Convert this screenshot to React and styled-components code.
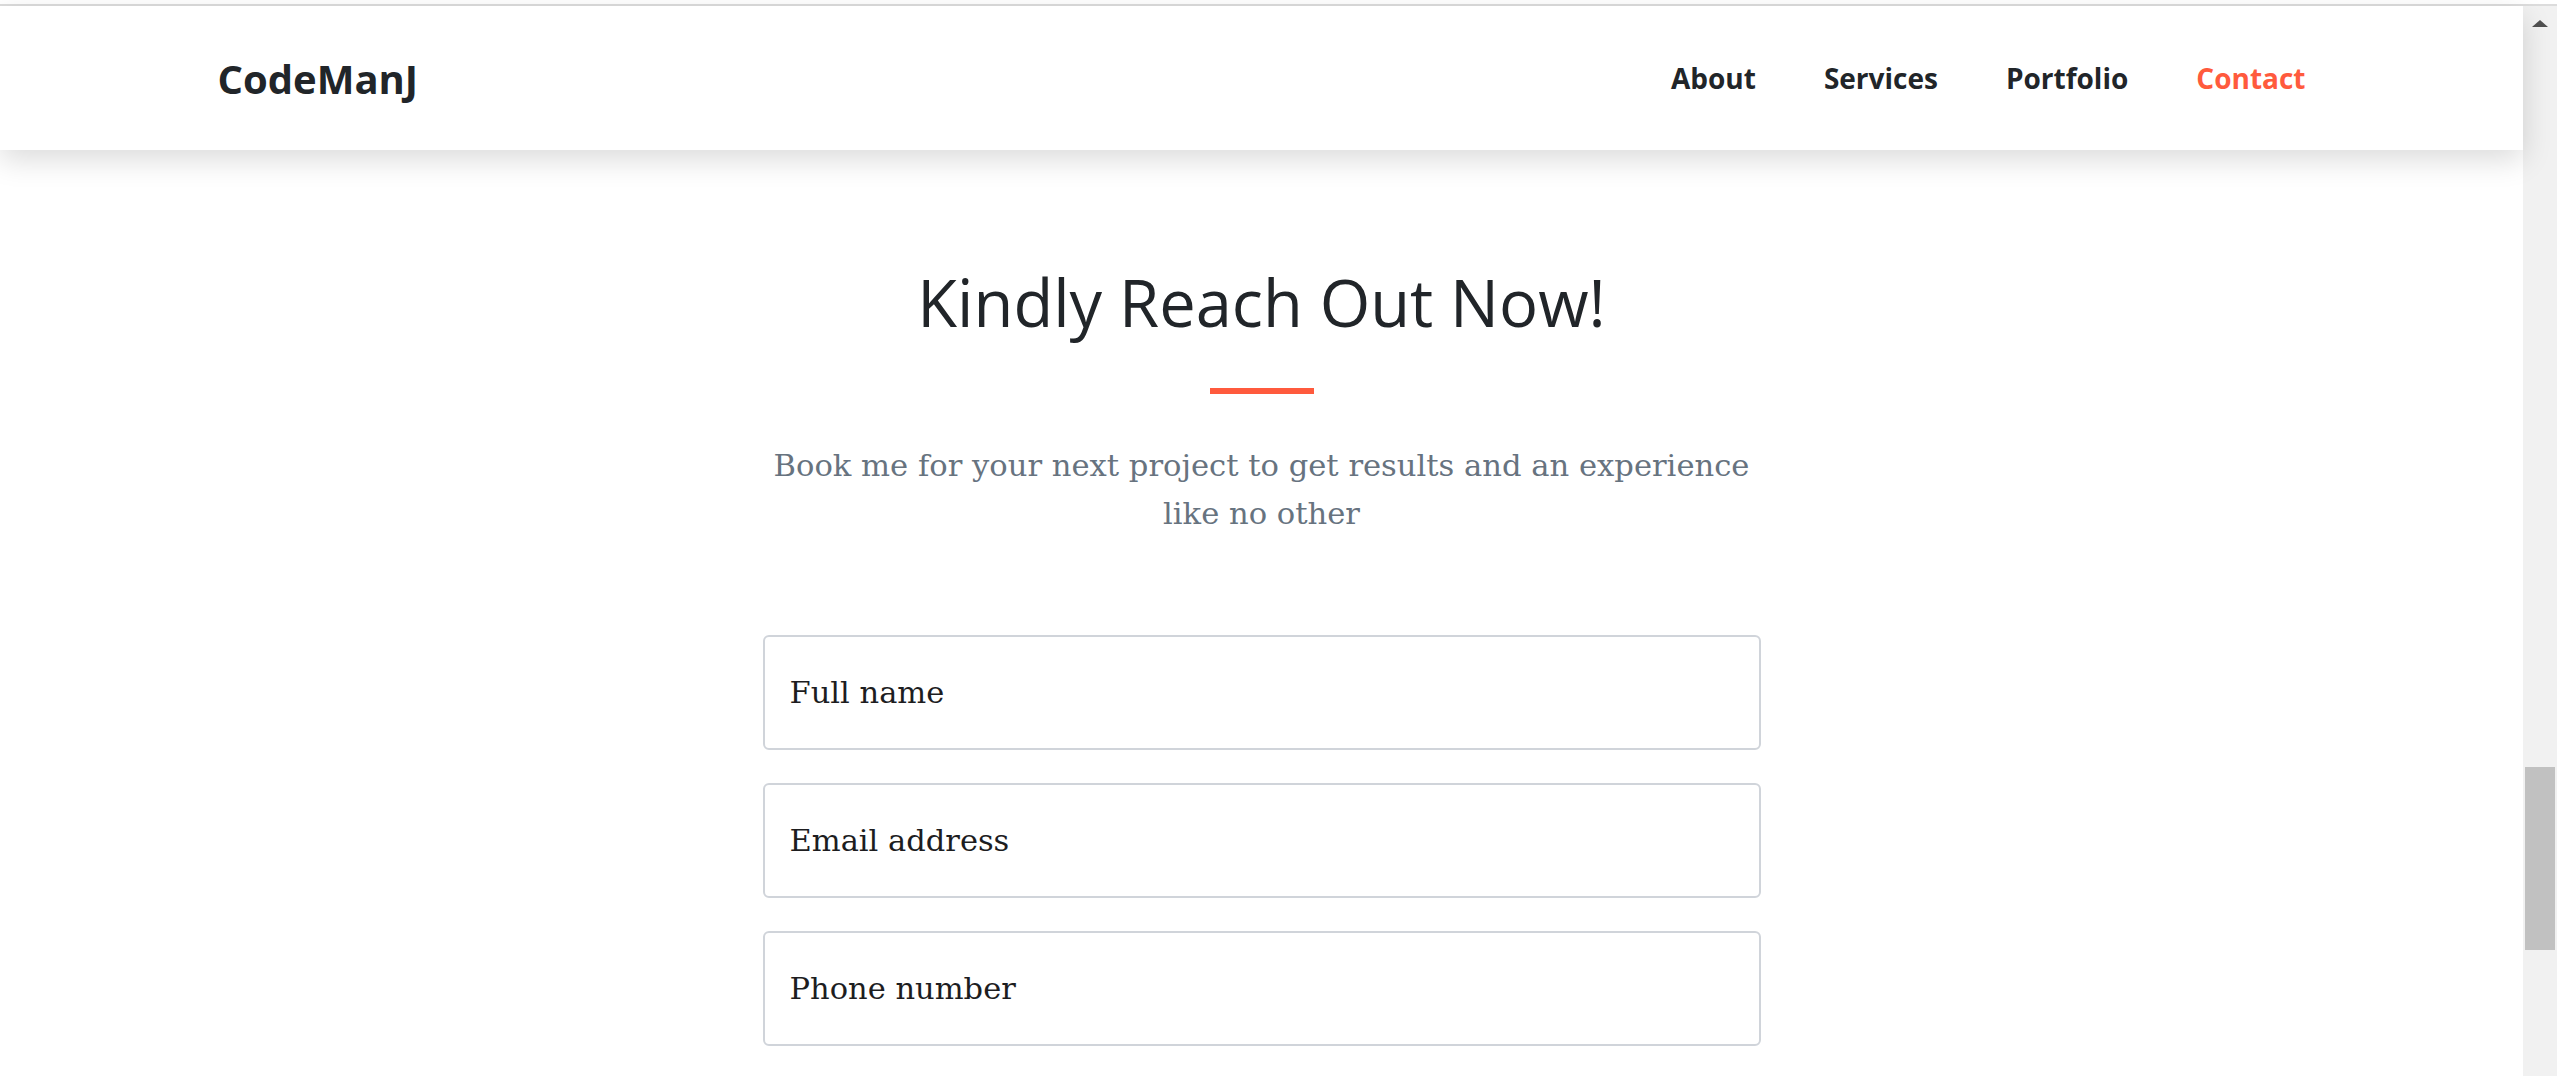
import React from 'react';
import styled, { createGlobalStyle } from 'styled-components';

const GlobalStyle = createGlobalStyle`
  html, body {
    margin: 0;
    padding: 0;
    height: 100%;
    overflow: hidden;
    background: #ffffff;
  }
  #root {
    height: 100%;
  }
  * {
    box-sizing: border-box;
  }
`;

const Screen = styled.div`
  height: 100vh;
  display: flex;
  flex-direction: column;
  padding-top: 4px;
`;

const TopLine = styled.div`
  height: 2px;
  background-color: #dcdcdc;
  flex-shrink: 0;
`;

const Frame = styled.div`
  flex: 1;
  display: flex;
  min-height: 0;
`;

const Page = styled.div`
  flex: 1;
  display: flex;
  flex-direction: column;
  min-width: 0;
`;

/* fake browser scrollbar */
const ScrollTrack = styled.div`
  width: 34px;
  flex-shrink: 0;
  background-color: #f1f1f1;
  display: flex;
  flex-direction: column;
  align-items: center;
`;

const ScrollArrow = styled.div`
  margin-top: 14px;
  width: 0;
  height: 0;
  border-left: 8px solid transparent;
  border-right: 8px solid transparent;
  border-bottom: 7px solid #505050;
`;

const ScrollThumb = styled.div`
  margin-top: 740px;
  width: 30px;
  height: 183px;
  background-color: #c1c1c1;
`;

const Navbar = styled.nav`
  position: relative;
  z-index: 2;
  height: 144px;
  flex-shrink: 0;
  background-color: #ffffff;
  box-shadow: 0 10px 28px rgba(0, 0, 0, 0.14);
`;

const NavInner = styled.div`
  max-width: 2088px;
  height: 100%;
  margin: 0 auto;
  display: flex;
  align-items: center;
  justify-content: space-between;
`;

const Logo = styled.a`
  font-family: 'Open Sans', 'Liberation Sans', sans-serif;
  font-weight: 700;
  font-size: 40px;
  color: #212529;
  text-decoration: none;
`;

const NavList = styled.ul`
  list-style: none;
  margin: 0;
  padding: 0;
  display: flex;
  gap: 68px;
`;

const NavLink = styled.a`
  font-family: 'Open Sans', 'Liberation Sans', sans-serif;
  font-weight: 700;
  font-size: 28px;
  color: ${({ $active }) => ($active ? '#ff5a3d' : '#212529')};
  text-decoration: none;
`;

const Section = styled.section`
  display: flex;
  flex-direction: column;
  align-items: center;
  padding-top: 113px;
`;

const Heading = styled.h2`
  margin: 0;
  font-family: 'Open Sans', 'Liberation Sans', sans-serif;
  font-weight: 400;
  font-size: 65px;
  line-height: 1.2;
  color: #212529;
`;

const Divider = styled.div`
  width: 104px;
  height: 6px;
  margin-top: 47px;
  background-color: #ff5a3d;
`;

const Lead = styled.p`
  margin: 48px 0 0;
  max-width: 1000px;
  font-family: 'DejaVu Serif', 'Liberation Serif', serif;
  font-size: 30.6px;
  line-height: 48px;
  text-align: center;
  color: #67737f;
`;

const Form = styled.form`
  width: 998px;
  margin-top: 97px;
  display: flex;
  flex-direction: column;
  gap: 33px;
`;

const Field = styled.input`
  height: 115px;
  width: 100%;
  padding: 0 25px;
  border: 2px solid #d0d4da;
  border-radius: 6px;
  font-family: 'DejaVu Serif', 'Liberation Serif', serif;
  font-size: 30.5px;
  color: #212529;
  background: #ffffff;
  outline: none;

  &::placeholder {
    color: #1d1d1f;
    opacity: 1;
  }
`;

const links = ['About', 'Services', 'Portfolio', 'Contact'];

const App = () => (
  <>
    <GlobalStyle />
    <Screen>
      <TopLine />
      <Frame>
        <Page>
          <Navbar>
            <NavInner>
              <Logo href="#">CodeManJ</Logo>
              <NavList>
                {links.map((link) => (
                  <li key={link}>
                    <NavLink href="#" $active={link === 'Contact'}>
                      {link}
                    </NavLink>
                  </li>
                ))}
              </NavList>
            </NavInner>
          </Navbar>

          <Section>
            <Heading>Kindly Reach Out Now!</Heading>
            <Divider />
            <Lead>Book me for your next project to get results and an experience like no other</Lead>
            <Form onSubmit={(e) => e.preventDefault()}>
              <Field type="text" placeholder="Full name" />
              <Field type="email" placeholder="Email address" />
              <Field type="tel" placeholder="Phone number" />
            </Form>
          </Section>
        </Page>
        <ScrollTrack>
          <ScrollArrow />
          <ScrollThumb />
        </ScrollTrack>
      </Frame>
    </Screen>
  </>
);

export default App;
